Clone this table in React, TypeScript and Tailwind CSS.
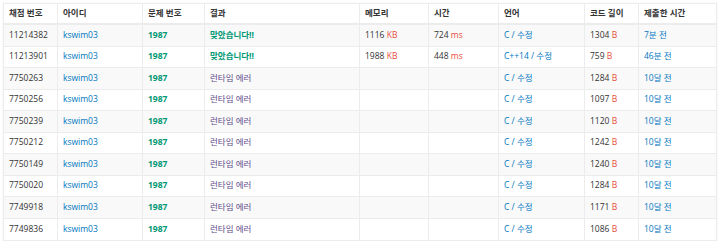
const cols = "grid grid-cols-[54px_85px_62px_155px_69px_70px_86px_54px_79px]";

interface Row {
  id: string;
  ok: boolean;
  mem?: string;
  time?: string;
  lang: string;
  len: string;
  when: string;
}

const rows: Row[] = [
  { id: "11214382", ok: true, mem: "1116", time: "724", lang: "C", len: "1304", when: "7분 전" },
  { id: "11213901", ok: true, mem: "1988", time: "448", lang: "C++14", len: "759", when: "46분 전" },
  { id: "7750263", ok: false, lang: "C", len: "1284", when: "10달 전" },
  { id: "7750256", ok: false, lang: "C", len: "1097", when: "10달 전" },
  { id: "7750239", ok: false, lang: "C", len: "1120", when: "10달 전" },
  { id: "7750212", ok: false, lang: "C", len: "1242", when: "10달 전" },
  { id: "7750149", ok: false, lang: "C", len: "1240", when: "10달 전" },
  { id: "7750020", ok: false, lang: "C", len: "1284", when: "10달 전" },
  { id: "7749918", ok: false, lang: "C", len: "1171", when: "10달 전" },
  { id: "7749836", ok: false, lang: "C", len: "1086", when: "10달 전" },
];

const headers = ["채점 번호", "아이디", "문제 번호", "결과", "메모리", "시간", "언어", "코드 길이", "제출한 시간"];

function Cell({ children, last }: { children?: React.ReactNode; last?: boolean }) {
  return (
    <div className={`flex items-center pl-[5px] whitespace-nowrap ${last ? "" : "border-r border-[#ececec]"}`}>
      {children}
    </div>
  );
}

export default function App() {
  return (
    <div className="w-[720px] h-[241px] bg-white p-[3px] text-[8.5px] text-[#333] font-['Open_Sans','Noto_Sans_CJK_KR',sans-serif]">
      <div className="border border-[#ececec] shadow-[0_0_2px_rgba(0,0,0,0.06)]">
        <div className={`${cols} h-[21px] border-b-2 border-[#ececec] font-bold`}>
          {headers.map((h, i) => (
            <Cell key={h} last={i === headers.length - 1}>
              {h}
            </Cell>
          ))}
        </div>
        {rows.map((r, i) => (
          <div
            key={r.id}
            className={`${cols} h-[21.5px] ${i < rows.length - 1 ? "border-b border-[#ececec]" : ""} ${
              i % 2 === 0 ? "bg-[#f9f9f9]" : "bg-white"
            }`}
          >
            <Cell>{r.id}</Cell>
            <Cell>
              <span className="text-[#0076c0]">kswim03</span>
            </Cell>
            <Cell>
              <span className="font-bold text-[#009874]">1987</span>
            </Cell>
            <Cell>
              {r.ok ? (
                <span className="font-bold text-[#009874]">맞았습니다!!</span>
              ) : (
                <span className="text-[#5f4b8b]">런타임 에러</span>
              )}
            </Cell>
            <Cell>
              {r.mem && (
                <span>
                  {r.mem} <span className="text-[#e74c3c]">KB</span>
                </span>
              )}
            </Cell>
            <Cell>
              {r.time && (
                <span>
                  {r.time} <span className="text-[#e74c3c]">ms</span>
                </span>
              )}
            </Cell>
            <Cell>
              <span className="text-[#0076c0]">
                {r.lang} / 수정
              </span>
            </Cell>
            <Cell>
              <span>
                {r.len} <span className="text-[#e74c3c]">B</span>
              </span>
            </Cell>
            <Cell last>
              <span className="text-[#0076c0]">{r.when}</span>
            </Cell>
          </div>
        ))}
      </div>
    </div>
  );
}
